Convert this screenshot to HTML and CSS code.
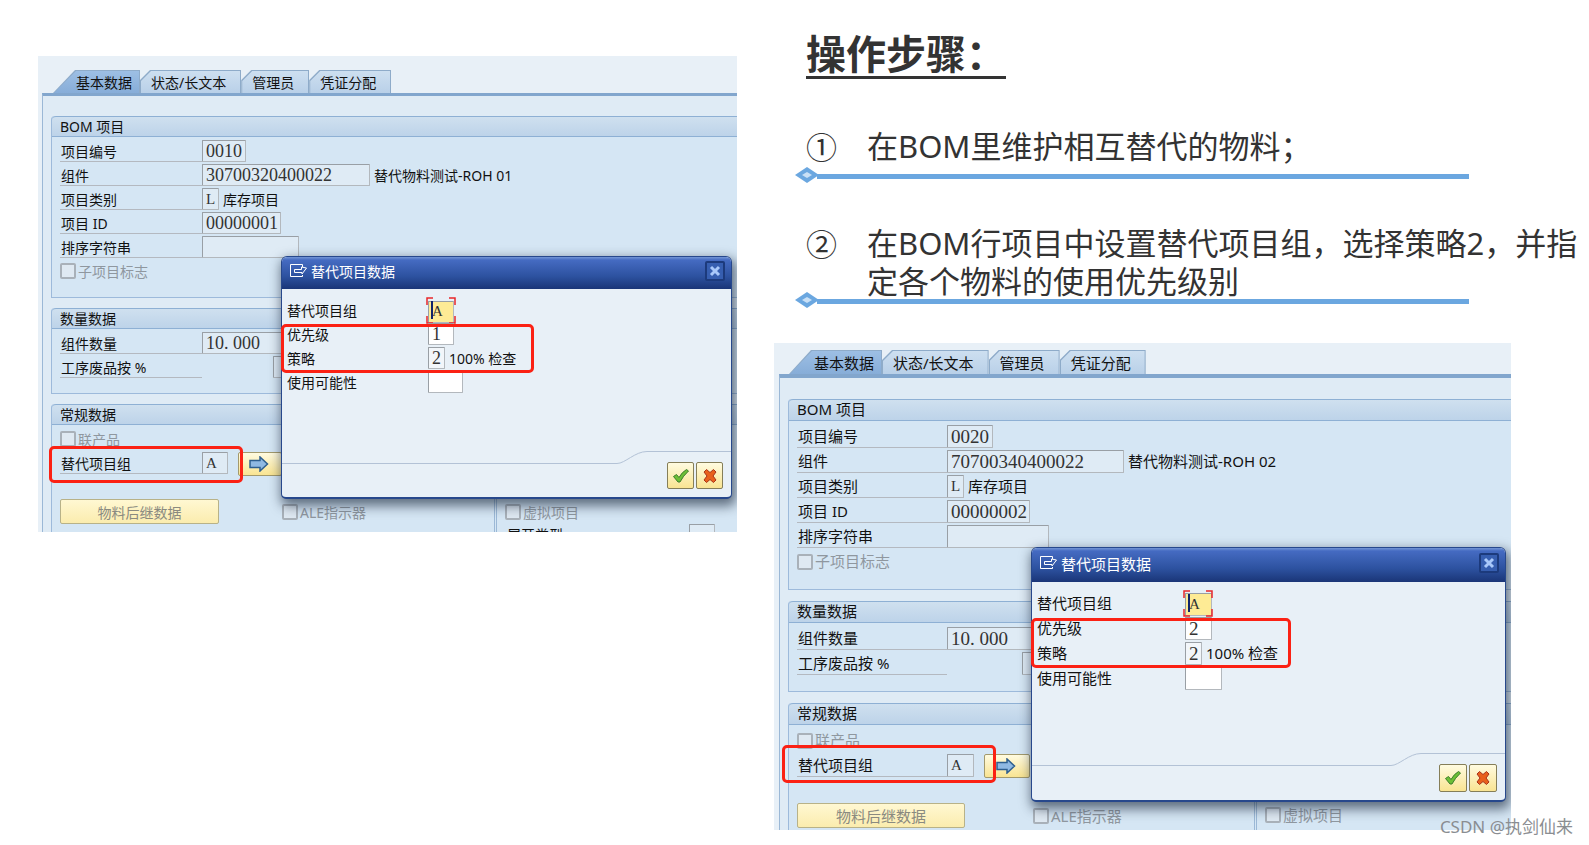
FILE: index.html
```
<!DOCTYPE html>
<html lang="zh-CN">
<head>
  <meta charset="UTF-8">
  <meta name="viewport" content="width=device-width, initial-scale=1.0">
  <title>操作步骤</title>
  <link rel="stylesheet" href="styles.css">
</head>
<body>
  <main class="page">

    <!-- ITEM 0010 -->
    <section class="sap">
      <nav class="tabs">
        <button class="tab active"><span>基本数据</span></button>
        <button class="tab"><span>状态/长文本</span></button>
        <button class="tab"><span>管理员</span></button>
        <button class="tab"><span>凭证分配</span></button>
      </nav>
      <div class="sap-body">
        <div class="group">
          <h2>BOM 项目</h2>
          <div class="row"><label for="a-no">项目编号</label><input id="a-no" class="w-no" value="0010" readonly></div>
          <div class="row"><label for="a-comp">组件</label><input id="a-comp" class="w-comp" value="30700320400022" readonly><span class="note">替代物料测试-ROH 01</span></div>
          <div class="row"><label for="a-cat">项目类别</label><input id="a-cat" class="w-one letter" value="L" readonly><span class="note">库存项目</span></div>
          <div class="row"><label for="a-id">项目 ID</label><input id="a-id" class="w-id" value="00000001" readonly></div>
          <div class="row"><label for="a-sort">排序字符串</label><input id="a-sort" class="w-sort" readonly></div>
          <div class="row check"><input type="checkbox" id="a-sub" disabled><label for="a-sub">子项目标志</label></div>
        </div>
        <div class="group">
          <h2>数量数据</h2>
          <div class="row"><label for="a-qty">组件数量</label><input id="a-qty" class="w-comp" value="10. 000" readonly></div>
          <div class="row"><label for="a-scrap">工序废品按 %</label><input id="a-scrap" class="w-scrap" readonly></div>
        </div>
        <div class="group last">
          <h2>常规数据</h2>
          <div class="row check"><input type="checkbox" id="a-co" disabled><label for="a-co">联产品</label></div>
          <div class="row marked">
            <label for="a-alt">替代项目组</label><input id="a-alt" class="w-two letter" value="A" readonly>
            <button class="arrow" aria-label="替代项目数据">
              <svg width="20" height="16" viewBox="0 0 20 16"><path d="M1 4.5h10V1l7.500 7-7.500 7v-3.500H1z" fill="#8fb9e3" stroke="#2e5f8f" stroke-width="1.500"/></svg>
            </button>
            <div class="mark"></div>
          </div>
          <div class="lower">
            <button class="wide" disabled>物料后继数据</button>
            <div class="ale check"><input type="checkbox" id="a-ale" disabled><label for="a-ale">ALE指示器</label></div>
            <div class="side">
              <div class="check"><input type="checkbox" id="a-ph" disabled><label for="a-ph">虚拟项目</label></div>
              <div class="cut"><label for="a-exp">展开类型</label><input id="a-exp" class="w-two" readonly></div>
            </div>
          </div>
        </div>
      </div>

      <div class="dialog" role="dialog" aria-label="替代项目数据">
        <div class="title">
          <svg width="19" height="16" viewBox="0 0 19 16" fill="none" stroke="#fff"><path d="M13.500 4V1.500h-12v12h12V12M5.500 6.500h7V4l5 1-4.500 6V9.500H5.500z"/></svg>
          <span>替代项目数据</span>
          <button class="close" aria-label="关闭">
            <svg width="12" height="12" viewBox="0 0 12 12"><path d="M2 2l8 8M10 2l-8 8" stroke="#a9c8fa" stroke-width="3"/></svg>
          </button>
        </div>
        <div class="fields">
          <div class="row">
            <label for="a-d1">替代项目组</label>
            <span class="focus"><input id="a-d1" class="w-two letter yellow" value="A">
              <svg viewBox="0 0 30 27" fill="none"><path d="M1 8V1h6M23 1h6v7M29 19v7h-6M7 26H1v-7" stroke="#e8262a" stroke-width="1.500"/><path d="M6 4v18" stroke="#10246b" stroke-width="2"/></svg>
            </span>
          </div>
          <div class="pair">
            <div class="row"><label for="a-d2">优先级</label><input id="a-d2" class="w-two" value="1"></div>
            <div class="row"><label for="a-d3">策略</label><input id="a-d3" class="w-one soft" value="2"><span class="note">100% 检查</span></div>
            <div class="mark"></div>
          </div>
          <div class="row"><label for="a-d4">使用可能性</label><input id="a-d4" class="w-three"></div>
        </div>
        <div class="curve">
          <i class="curve-left"></i>
          <svg width="30" height="13" viewBox="0 0 30 13" fill="none"><path d="M0 12.500C8 12.500 18 .5 30 .5" stroke="#b3c2d6"/></svg>
          <i class="curve-right"></i>
        </div>
        <div class="actions">
          <button aria-label="确认"><svg width="18" height="16" viewBox="0 0 18 16"><path d="M1.500 8.500l3-2 2.500 3Q10 4 14.500 1.500l2 1.500Q11 8 8 14H6z" fill="#6cbf35" stroke="#3c7d2c"/></svg></button>
          <button aria-label="取消"><svg width="16" height="16" viewBox="0 0 16 16"><path d="M2 4l2.500-2.500L8 4.500l3.500-3L14 4l-3 4 3 4-2.500 2.500L8 11.500l-3.500 3L2 12l3-4z" fill="#e8601c" stroke="#a8321a"/></svg></button>
        </div>
      </div>
    </section>

    <div class="right">
      <h1>操作步骤：</h1>
      <div class="step">
        <span class="num">①</span>
        <p>在BOM里维护相互替代的物料；</p>
      </div>
      <div class="rule">
        <svg width="24" height="16" viewBox="0 0 24 16"><path d="M0 8L12 0l12 8-12 8z" fill="#6ba7e0"/><path d="M7 8l5-3 5 3-5 3z" fill="#c9e0f6"/></svg>
        <div class="bar"></div>
      </div>
      <div class="step second">
        <span class="num">②</span>
        <p>在BOM行项目中设置替代项目组，选择策略2，并指定各个物料的使用优先级别</p>
      </div>
      <div class="rule tight">
        <svg width="24" height="16" viewBox="0 0 24 16"><path d="M0 8L12 0l12 8-12 8z" fill="#6ba7e0"/><path d="M7 8l5-3 5 3-5 3z" fill="#c9e0f6"/></svg>
        <div class="bar"></div>
      </div>

      <!-- ITEM 0020 -->
      <section class="sap large">
        <nav class="tabs">
          <button class="tab active"><span>基本数据</span></button>
          <button class="tab"><span>状态/长文本</span></button>
          <button class="tab"><span>管理员</span></button>
          <button class="tab"><span>凭证分配</span></button>
        </nav>
        <div class="sap-body">
          <div class="group">
            <h2>BOM 项目</h2>
            <div class="row"><label for="b-no">项目编号</label><input id="b-no" class="w-no" value="0020" readonly></div>
            <div class="row"><label for="b-comp">组件</label><input id="b-comp" class="w-comp" value="70700340400022" readonly><span class="note">替代物料测试-ROH 02</span></div>
            <div class="row"><label for="b-cat">项目类别</label><input id="b-cat" class="w-one letter" value="L" readonly><span class="note">库存项目</span></div>
            <div class="row"><label for="b-id">项目 ID</label><input id="b-id" class="w-id" value="00000002" readonly></div>
            <div class="row"><label for="b-sort">排序字符串</label><input id="b-sort" class="w-sort" readonly></div>
            <div class="row check"><input type="checkbox" id="b-sub" disabled><label for="b-sub">子项目标志</label></div>
          </div>
          <div class="group">
            <h2>数量数据</h2>
            <div class="row"><label for="b-qty">组件数量</label><input id="b-qty" class="w-comp" value="10. 000" readonly></div>
            <div class="row"><label for="b-scrap">工序废品按 %</label><input id="b-scrap" class="w-scrap" readonly></div>
          </div>
          <div class="group last">
            <h2>常规数据</h2>
            <div class="row check"><input type="checkbox" id="b-co" disabled><label for="b-co">联产品</label></div>
            <div class="row marked">
              <label for="b-alt">替代项目组</label><input id="b-alt" class="w-two letter" value="A" readonly>
              <button class="arrow" aria-label="替代项目数据">
                <svg width="20" height="16" viewBox="0 0 20 16"><path d="M1 4.5h10V1l7.500 7-7.500 7v-3.500H1z" fill="#8fb9e3" stroke="#2e5f8f" stroke-width="1.500"/></svg>
              </button>
              <div class="mark"></div>
            </div>
            <div class="lower">
              <button class="wide" disabled>物料后继数据</button>
              <div class="ale check"><input type="checkbox" id="b-ale" disabled><label for="b-ale">ALE指示器</label></div>
              <div class="side">
                <div class="check"><input type="checkbox" id="b-ph" disabled><label for="b-ph">虚拟项目</label></div>
              </div>
            </div>
          </div>
        </div>

        <div class="dialog" role="dialog" aria-label="替代项目数据">
          <div class="title">
            <svg width="19" height="16" viewBox="0 0 19 16" fill="none" stroke="#fff"><path d="M13.500 4V1.500h-12v12h12V12M5.500 6.500h7V4l5 1-4.500 6V9.500H5.500z"/></svg>
            <span>替代项目数据</span>
            <button class="close" aria-label="关闭">
              <svg width="12" height="12" viewBox="0 0 12 12"><path d="M2 2l8 8M10 2l-8 8" stroke="#a9c8fa" stroke-width="3"/></svg>
            </button>
          </div>
          <div class="fields">
            <div class="row">
              <label for="b-d1">替代项目组</label>
              <span class="focus"><input id="b-d1" class="w-two letter yellow" value="A">
                <svg viewBox="0 0 30 27" fill="none"><path d="M1 8V1h6M23 1h6v7M29 19v7h-6M7 26H1v-7" stroke="#e8262a" stroke-width="1.500"/><path d="M6 4v18" stroke="#10246b" stroke-width="2"/></svg>
              </span>
            </div>
            <div class="pair">
              <div class="row"><label for="b-d2">优先级</label><input id="b-d2" class="w-two" value="2"></div>
              <div class="row"><label for="b-d3">策略</label><input id="b-d3" class="w-one soft" value="2"><span class="note">100% 检查</span></div>
              <div class="mark"></div>
            </div>
            <div class="row"><label for="b-d4">使用可能性</label><input id="b-d4" class="w-three"></div>
          </div>
          <div class="curve">
            <i class="curve-left"></i>
            <svg width="30" height="13" viewBox="0 0 30 13" fill="none"><path d="M0 12.500C8 12.500 18 .5 30 .5" stroke="#b3c2d6"/></svg>
            <i class="curve-right"></i>
          </div>
          <div class="actions">
            <button aria-label="确认"><svg width="18" height="16" viewBox="0 0 18 16"><path d="M1.500 8.500l3-2 2.500 3Q10 4 14.500 1.500l2 1.500Q11 8 8 14H6z" fill="#6cbf35" stroke="#3c7d2c"/></svg></button>
            <button aria-label="取消"><svg width="16" height="16" viewBox="0 0 16 16"><path d="M2 4l2.500-2.500L8 4.500l3.500-3L14 4l-3 4 3 4-2.500 2.500L8 11.500l-3.500 3L2 12l3-4z" fill="#e8601c" stroke="#a8321a"/></svg></button>
          </div>
        </div>
      </section>
    </div>

    <div class="watermark">CSDN @执剑仙来</div>
  </main>
</body>
</html>
```

FILE: styles.css
```
/* Stylesheet */
* {
  box-sizing: border-box;
}

body {
  margin: 0;
  background-color: #fff;
  color: #333;
  font-family: "Noto Sans", "Noto Sans CJK SC", sans-serif;
}

button,
input {
  font-family: inherit;
  margin: 0;
  padding: 0;
}

svg {
  display: block;
  flex: none;
}

.page {
  position: relative;
  display: grid;
  grid-template-columns: minmax(0, 699fr) minmax(0, 815fr);
  column-gap: 37px;
  align-items: start;
  min-height: 100vh;
  padding-left: 38px;
}

/* Instructions */
.right {
  padding-top: 29px;
}

h1 {
  display: table;
  margin: 0 0 48px 32px;
  border-bottom: 3px solid #333;
  font-family: "Noto Sans CJK SC", sans-serif;
  font-size: 40px;
  font-weight: bold;
  line-height: 47px;
}

.step {
  display: flex;
  padding-left: 32px;
  font-size: 31px;
  line-height: 38px;
}

.step.second {
  margin-top: 41px;
}

.step p {
  margin: 0;
  flex: 1;
}

.num {
  width: 61px;
  font-family: "Noto Sans CJK SC", sans-serif;
}

.rule {
  display: flex;
  margin: 2px 120px 0 21px;
}

.rule.tight {
  margin-top: -8px;
}

.bar {
  flex: 1;
  height: 5px;
  margin: 7px 0 0 -2px;
  background-color: #6ba7e0;
}

/* SAP screen, sizes that differ between the two are variables */
.sap {
  --row: 24px;
  --head: 21px;
  --pad: 3px;
  --end: 13px;
  --gap: 10px;
  --fs: 14px;
  --num: 18px;
  --label: 142px;
  position: relative;
  overflow: hidden;
  margin-top: 56px;
  padding-top: 14px;
  background-color: #e8f0f7;
  color: #111;
  font-size: var(--fs);
}

.sap.large {
  --row: 25px;
  --head: 22px;
  --pad: 4px;
  --end: 14px;
  --gap: 11px;
  --fs: 15px;
  --num: 19px;
  --label: 150px;
  margin: 35px 78px 0 0;
  padding-top: 7px;
}

.tabs {
  display: flex;
  padding-left: 15px;
}

.tab {
  position: relative;
  height: 23px;
  padding: 0 15px 0 11px;
  border: none;
  background-color: #8eabc9;
  color: #111;
  font-size: var(--fs);
  line-height: 25px;
  white-space: nowrap;
  clip-path: polygon(0 10px, 10px 0, 100% 0, 100% 100%, 0 100%);
}

.large .tab {
  height: 24px;
  line-height: 26px;
}

.tab::before {
  content: "";
  position: absolute;
  inset: 1px 1px 0 1px;
  background: linear-gradient(#cddff0, #b9d0e8);
  clip-path: polygon(0 10px, 10px 0, 100% 0, 100% 100%, 0 100%);
}

.tab span {
  position: relative;
}

.tab.active {
  padding: 0 8px 0 23px;
}

.large .tab.active {
  padding-left: 25px;
}

.tab.active::before {
  background: linear-gradient(#9dbfe4, #87add8);
}

.tab.active,
.tab.active::before {
  clip-path: polygon(0 100%, 22px 0, 100% 0, 100% 100%);
}

.sap-body {
  margin-left: 4px;
  padding: 20px 0 0 8px;
  border-top: 3px solid #82a6cd;
  border-left: 1px solid #9bb8d6;
  background-color: #dfebf5;
}

.large .sap-body {
  margin-left: 5px;
  padding-top: 21px;
  border-top-width: 4px;
}

.group {
  margin-bottom: var(--gap);
  padding: 0 0 var(--end) 8px;
  border: solid #9dbadb;
  border-width: 0 0 1px 1px;
  border-top-left-radius: 4px;
  background-color: #d5e6f4;
}

.group.last {
  margin-bottom: 0;
  padding-bottom: 0;
  border-bottom: none;
}

.group h2 {
  height: var(--head);
  margin: 0 0 var(--pad) -8px;
  padding-left: 8px;
  border: solid #8eb0d4;
  border-width: 1px 0;
  border-top-left-radius: 4px;
  background: linear-gradient(#cfe0ef, #bdd3e9);
  font-size: var(--fs);
  font-weight: normal;
  line-height: 19px;
}

.row {
  display: flex;
  height: var(--row);
  padding-bottom: 2px;
  line-height: 23px;
}

.row > label {
  width: var(--label);
  padding-left: 1px;
  border-bottom: 1px solid #b4b9c0;
  white-space: nowrap;
}

.row input,
.cut input {
  height: 100%;
  padding: 0 0 0 3px;
  border: 1px solid #b3b8bd;
  border-top-color: #999fa5;
  border-left-color: #999fa5;
  border-radius: 1px;
  background-color: #dfebf5;
  color: #333;
  font-family: "Liberation Serif", serif;
  font-size: var(--num);
}

.row input.letter {
  font-size: 15px;
}

input.w-one { width: 17px; }
input.w-two { width: 26px; }
input.w-three { width: 35px; }
input.w-no { width: 44px; }
input.w-id { width: 79px; }
input.w-sort { width: 97px; }
input.w-comp { width: 168px; }
input.w-scrap { width: 120px; margin-left: 71px; }

.large input.w-two { width: 27px; }
.large input.w-three { width: 37px; }
.large input.w-no { width: 46px; }
.large input.w-id { width: 83px; }
.large input.w-sort { width: 102px; }
.large input.w-comp { width: 177px; }
.large input.w-scrap { margin-left: 75px; }

.note {
  padding-left: 4px;
  white-space: nowrap;
}

.check {
  display: flex;
  align-items: center;
  color: #8f979f;
}

.check input[type="checkbox"] {
  appearance: none;
  flex: none;
  width: 16px;
  height: 16px;
  padding: 0;
  border: 2px solid #a9b1b9;
  border-radius: 2px;
  background-color: #dfe9f2;
}

.check label {
  width: auto;
  padding-left: 2px;
  border: none;
  white-space: nowrap;
}

.marked {
  position: relative;
}

.arrow,
.wide,
.actions button {
  border: 1px solid #a39a6c;
  border-radius: 2px;
  background: linear-gradient(#fffbe0, #f9e492);
}

.arrow {
  display: flex;
  align-items: center;
  justify-content: center;
  width: 44px;
  height: 24px;
  margin-left: 10px;
  padding-right: 3px;
}

.large .arrow {
  width: 46px;
}

.mark {
  position: absolute;
  border: 3px solid #fb2114;
  border-radius: 5px;
  pointer-events: none;
}

.marked .mark {
  left: -11px;
  top: -6px;
  width: 194px;
  height: 37px;
}

.large .marked .mark {
  left: -15px;
  top: -9px;
  width: 214px;
  height: 38px;
}

.lower {
  display: flex;
  align-items: flex-start;
}

.wide {
  width: 159px;
  height: 25px;
  margin-top: 23px;
  border-color: #b8b288;
  background: linear-gradient(#fff8d2, #fbecae);
  color: #8a8a80;
  font-size: var(--fs);
}

.large .wide {
  width: 168px;
  margin: 24px 0 2px;
}

.ale {
  width: 212px;
  height: 25px;
  margin: 23px 0 0 63px;
}

.large .ale {
  width: 221px;
  margin: 24px 0 0 68px;
}

.side {
  flex: 1;
  align-self: stretch;
  padding: 23px 0 0 8px;
  border-left: 3px double #9bb8d6;
}

.side .check {
  height: 25px;
}

.cut {
  display: flex;
  overflow: hidden;
  height: 8px;
  line-height: 22px;
}

.cut label {
  width: 184px;
  padding-left: 2px;
}

.cut input {
  height: 22px;
}

/* Dialog */
.dialog {
  position: absolute;
  left: 243px;
  right: 5px;
  top: 200px;
  border: 1px solid #27488c;
  border-bottom-width: 2px;
  border-radius: 6px 6px 5px 5px;
  background-color: #e8f0f7;
  box-shadow: 2px 5px 12px 2px rgba(30, 45, 65, 0.65);
}

.large .dialog {
  left: 257px;
  top: 204px;
}

.title {
  display: flex;
  align-items: center;
  height: 32px;
  padding: 0 6px 4px 7px;
  border-radius: 5px 5px 0 0;
  background: linear-gradient(#7395d5 0, #456bc2 3px, #2d52a0 60%, #1a3577);
  color: #fff;
}

.large .title {
  height: 34px;
}

.title span {
  flex: 1;
  padding-left: 3px;
}

.close {
  display: flex;
  align-items: center;
  justify-content: center;
  width: 20px;
  height: 20px;
  border: 2px solid #1c3a7c;
  border-radius: 2px;
  background-color: #365eb0;
}

.fields {
  padding: 10px 0 56px 4px;
}

.fields .row > label {
  border: none;
}

.fields .row input {
  background-color: #fff;
}

.fields .row input.soft {
  background-color: #f2f6fa;
}

.fields .row input.yellow {
  background-color: #feeb95;
}

.large .fields {
  --label: 149px;
  padding-bottom: 61px;
}

.focus {
  position: relative;
}

.focus svg {
  position: absolute;
  left: -2px;
  top: -2px;
  width: 30px;
  height: 27px;
}

.pair {
  position: relative;
}

.pair .mark {
  left: -5px;
  top: 1px;
  width: 253px;
  height: 49px;
}

.large .pair .mark {
  width: 260px;
  height: 50px;
}

.curve {
  display: flex;
  height: 13px;
}

.curve-left {
  flex: 1;
  border-bottom: 1px solid #b3c2d6;
}

.curve-right {
  width: 84px;
  border-top: 1px solid #b3c2d6;
}

.actions {
  display: flex;
  justify-content: flex-end;
  gap: 2px;
  margin-top: -2px;
  padding: 0 8px 8px 0;
}

.actions button {
  display: flex;
  align-items: center;
  justify-content: center;
  width: 27px;
  height: 27px;
  border-color: #857e58;
}

.large .actions button {
  width: 28px;
  height: 28px;
}

.watermark {
  position: absolute;
  right: 16px;
  bottom: 6px;
  color: #8a8d91;
  font-size: 17px;
  line-height: 24px;
}
```
